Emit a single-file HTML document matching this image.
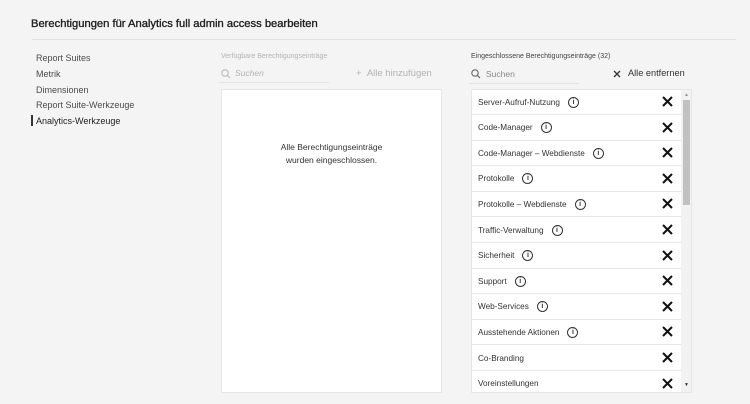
<!DOCTYPE html><html><head><style>
body{margin:0;width:750px;height:404px;background:#f4f4f4;font-family:"Liberation Sans",sans-serif;color:#2c2c2c;position:relative;overflow:hidden}
.a{position:absolute}
.nav{font-size:9px;color:#4b4b4b}
.row{position:absolute;left:0;width:209px;height:25px;border-bottom:1px solid #e6e6e6;font-size:8.2px;display:flex;align-items:center;padding-left:6px;box-sizing:border-box;color:#333}
.i{display:inline-block;width:9px;height:9px;border:1.2px solid #333;border-radius:50%;margin-left:8px;font-size:7px;line-height:9px;text-align:center;font-weight:bold}
.x{position:absolute;right:8px;top:6px}
</style></head><body>
<div class="a" style="left:31px;top:18px;font-size:11.2px;color:#222;-webkit-text-stroke:0.35px #222">Berechtigungen für Analytics full admin access bearbeiten</div>
<div class="a" style="left:32px;top:39px;width:704px;height:1px;background:#e1e1e1"></div>
<div class="a nav" style="left:36px;top:53px">Report Suites</div>
<div class="a nav" style="left:36px;top:69px">Metrik</div>
<div class="a nav" style="left:36px;top:85px">Dimensionen</div>
<div class="a nav" style="left:36px;top:100px">Report Suite-Werkzeuge</div>
<div class="a" style="left:31px;top:115px;width:1.5px;height:11px;background:#333"></div>
<div class="a nav" style="left:36px;top:116px;color:#222">Analytics-Werkzeuge</div>

<div class="a" style="left:221px;top:53px;font-size:7px;color:#b3b3b3">Verfügbare Berechtigungseinträge</div>
<svg class="a" style="left:221px;top:69px" width="10" height="10"><circle cx="4" cy="4" r="3.2" fill="none" stroke="#bbb" stroke-width="1.1"/><path d="M6.3 6.3L9 9" stroke="#bbb" stroke-width="1.2"/></svg>
<div class="a" style="left:235px;top:68px;font-size:8.5px;color:#b3b3b3;font-style:italic">Suchen</div>
<div class="a" style="left:219px;top:82px;width:110px;height:1px;background:#e4e4e4"></div>
<div class="a" style="left:356px;top:68px;font-size:9.5px;color:#b3b3b3">+ &nbsp;Alle hinzufügen</div>
<div class="a" style="left:221px;top:89px;width:221px;height:304px;background:#fff;border:1px solid #e6e6e6;box-sizing:border-box"></div>
<div class="a" style="left:221px;top:141px;width:221px;text-align:center;font-size:8.5px;line-height:13px;color:#333">Alle Berechtigungseinträge<br>wurden eingeschlossen.</div>

<div class="a" style="left:471px;top:53px;font-size:7px;color:#444">Eingeschlossene Berechtigungseinträge (32)</div>
<svg class="a" style="left:471px;top:69px" width="10" height="10"><circle cx="4" cy="4" r="3.2" fill="none" stroke="#666" stroke-width="1.1"/><path d="M6.3 6.3L9 9" stroke="#666" stroke-width="1.2"/></svg>
<div class="a" style="left:486px;top:69px;font-size:8.5px;color:#888">Suchen</div>
<div class="a" style="left:469px;top:83px;width:110px;height:1px;background:#e4e4e4"></div>
<svg class="a" style="left:613px;top:70px" width="8" height="8"><path d="M1 1L7 7M7 1L1 7" stroke="#333" stroke-width="1.3"/></svg>
<div class="a" style="left:628px;top:68px;font-size:9.2px;color:#333">Alle entfernen</div>

<div class="a" style="left:471px;top:89px;width:221px;height:304px;background:#fff;border:1px solid #e6e6e6;box-sizing:border-box;overflow:hidden">
<div style="position:absolute;left:0;top:0;width:209px;height:305px">
<div class="row" style="top:0">Server-Aufruf-Nutzung<span class="i">i</span><svg class="x" width="11" height="11"><path d="M1 1L10 10M10 1L1 10" stroke="#111" stroke-width="2"/></svg></div>
<div class="row" style="top:25.6px">Code-Manager<span class="i">i</span><svg class="x" width="11" height="11"><path d="M1 1L10 10M10 1L1 10" stroke="#111" stroke-width="2"/></svg></div>
<div class="row" style="top:51.2px">Code-Manager – Webdienste<span class="i">i</span><svg class="x" width="11" height="11"><path d="M1 1L10 10M10 1L1 10" stroke="#111" stroke-width="2"/></svg></div>
<div class="row" style="top:76.8px">Protokolle<span class="i">i</span><svg class="x" width="11" height="11"><path d="M1 1L10 10M10 1L1 10" stroke="#111" stroke-width="2"/></svg></div>
<div class="row" style="top:102.4px">Protokolle – Webdienste<span class="i">i</span><svg class="x" width="11" height="11"><path d="M1 1L10 10M10 1L1 10" stroke="#111" stroke-width="2"/></svg></div>
<div class="row" style="top:128px">Traffic-Verwaltung<span class="i">i</span><svg class="x" width="11" height="11"><path d="M1 1L10 10M10 1L1 10" stroke="#111" stroke-width="2"/></svg></div>
<div class="row" style="top:153.6px">Sicherheit<span class="i">i</span><svg class="x" width="11" height="11"><path d="M1 1L10 10M10 1L1 10" stroke="#111" stroke-width="2"/></svg></div>
<div class="row" style="top:179.2px">Support<span class="i">i</span><svg class="x" width="11" height="11"><path d="M1 1L10 10M10 1L1 10" stroke="#111" stroke-width="2"/></svg></div>
<div class="row" style="top:204.8px">Web-Services<span class="i">i</span><svg class="x" width="11" height="11"><path d="M1 1L10 10M10 1L1 10" stroke="#111" stroke-width="2"/></svg></div>
<div class="row" style="top:230.4px">Ausstehende Aktionen<span class="i">i</span><svg class="x" width="11" height="11"><path d="M1 1L10 10M10 1L1 10" stroke="#111" stroke-width="2"/></svg></div>
<div class="row" style="top:256px">Co-Branding<svg class="x" width="11" height="11"><path d="M1 1L10 10M10 1L1 10" stroke="#111" stroke-width="2"/></svg></div>
<div class="row" style="top:281.6px">Voreinstellungen<svg class="x" width="11" height="11"><path d="M1 1L10 10M10 1L1 10" stroke="#111" stroke-width="2"/></svg></div>
</div>
<div style="position:absolute;left:209px;top:0;width:11px;height:304px;background:#f2f2f2"></div>
<div style="position:absolute;left:211px;top:10px;width:7px;height:105px;background:#c1c1c1"></div>
<div style="position:absolute;left:212px;top:2px;font-size:5px;color:#999">▲</div>
<div style="position:absolute;left:212px;top:292px;font-size:5px;color:#333">▼</div>
</div>
</body></html>
